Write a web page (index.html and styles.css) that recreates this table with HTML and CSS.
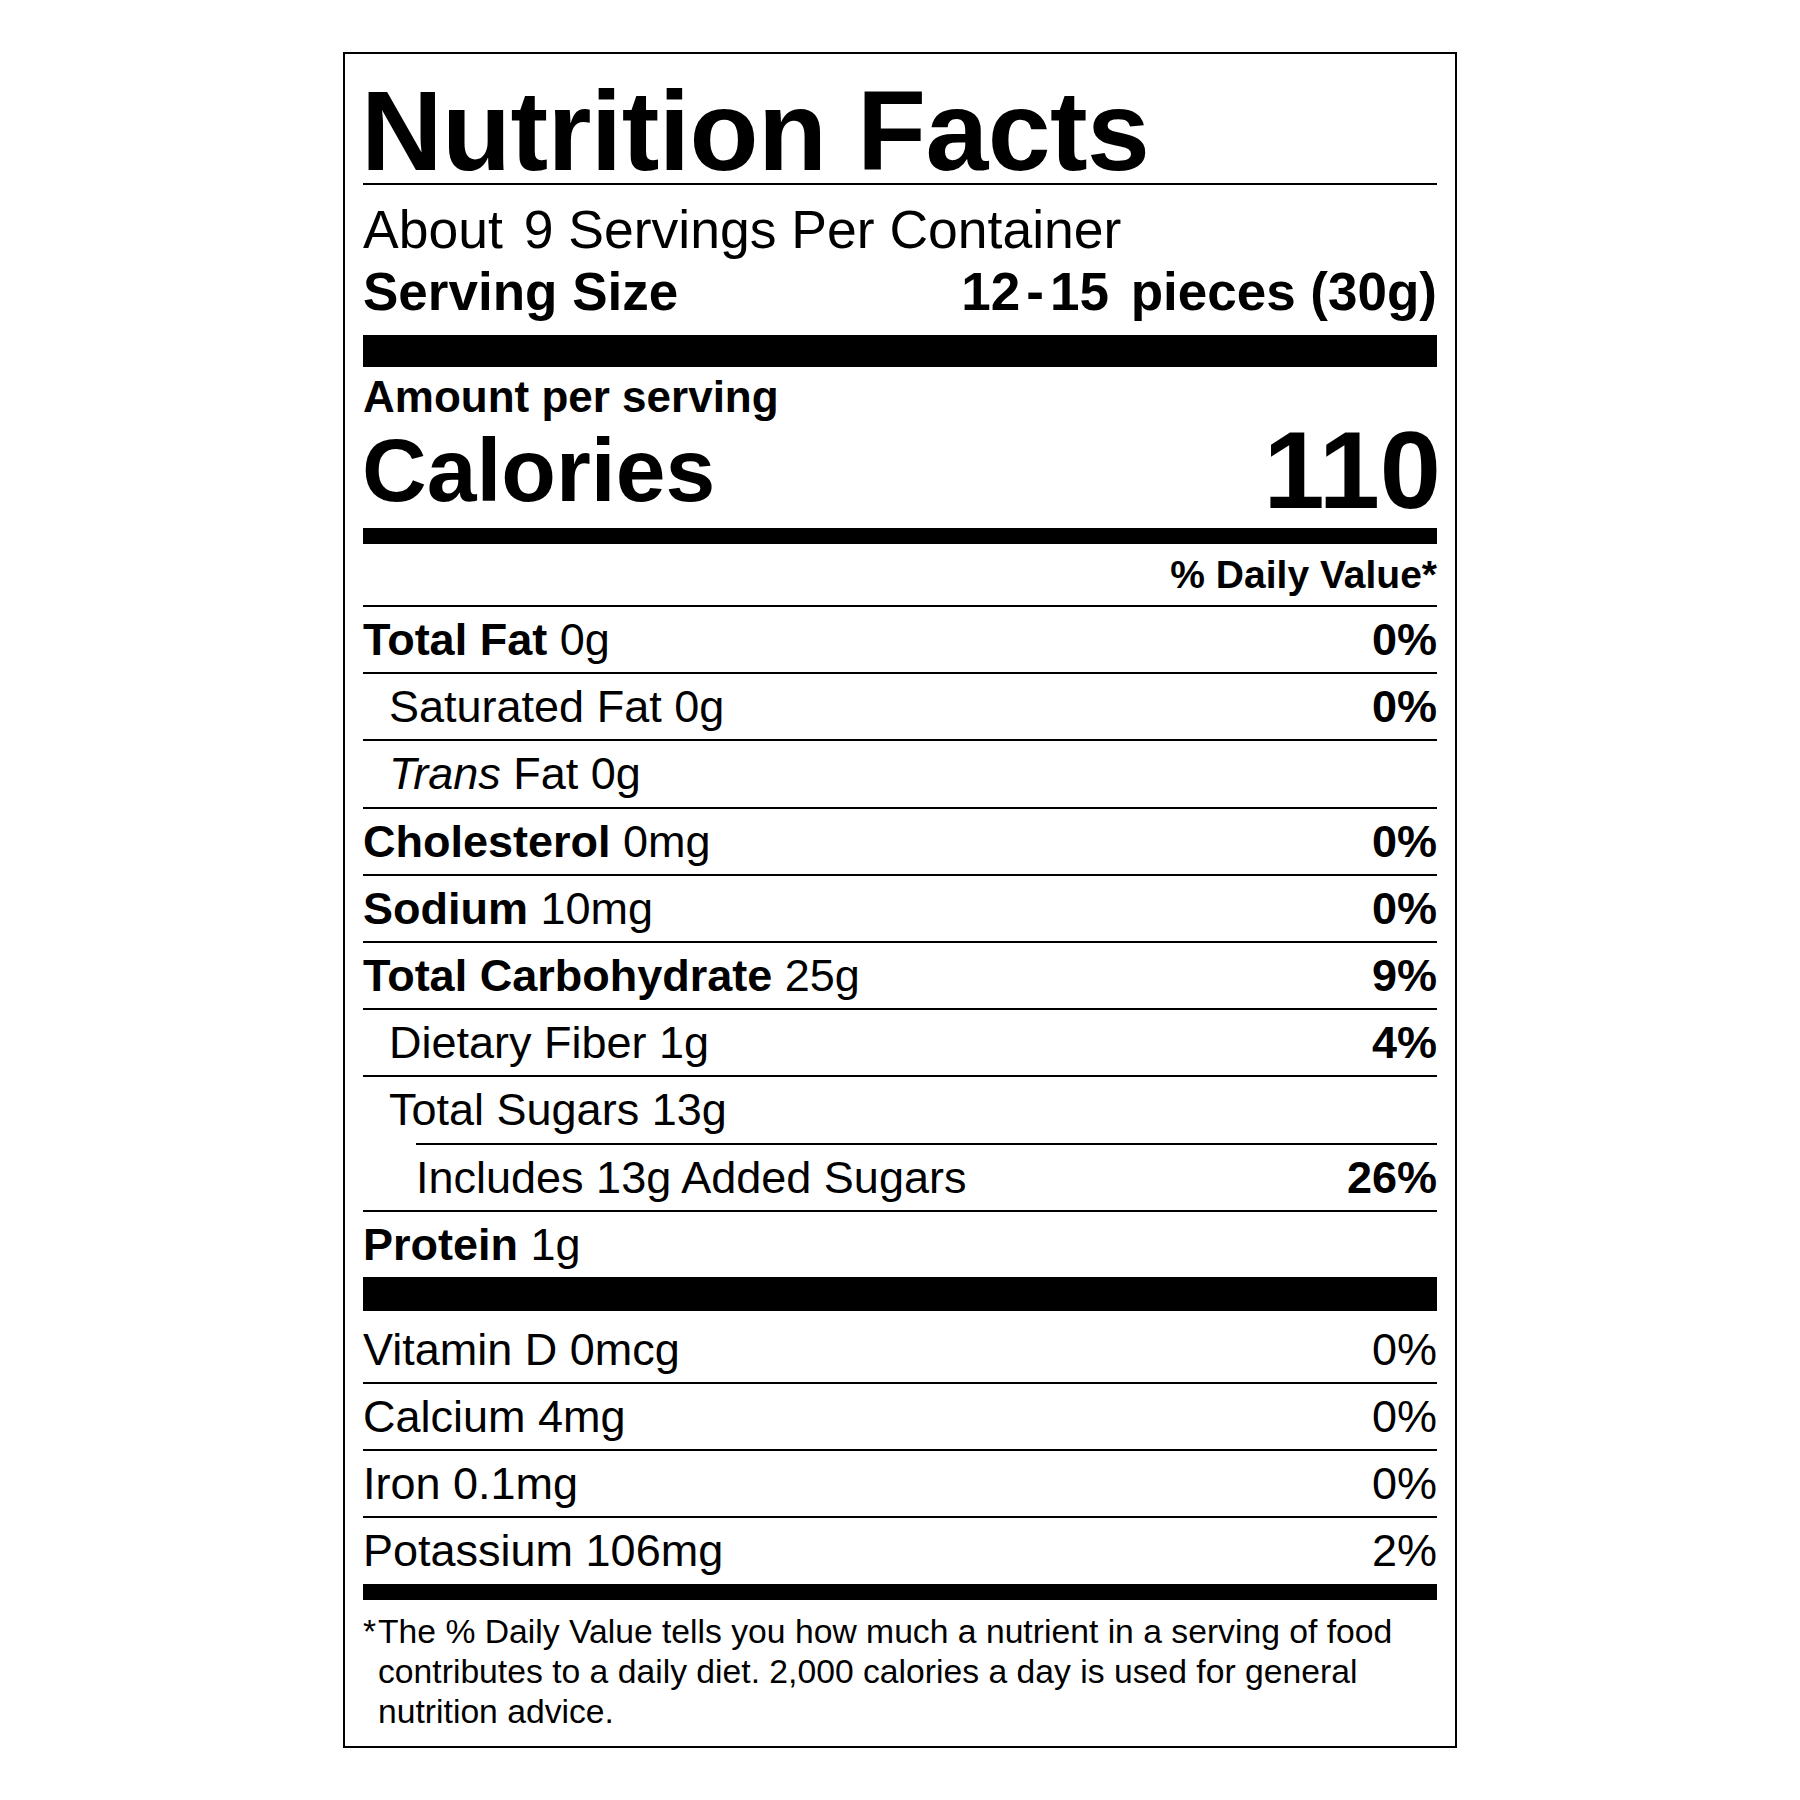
FILE: index.html
```html
<!DOCTYPE html>
<html lang="en">
<head>
<meta charset="utf-8">
<title>Nutrition Facts</title>
<link rel="stylesheet" href="styles.css">
</head>
<body>
<div class="label">
  <h1 class="title">Nutrition Facts</h1>
  <div class="servings"><span class="about">About</span> 9 Servings Per Container</div>
  <div class="serving-size">
    <span>Serving Size</span>
    <span><span class="qty">12<span class="dash">-</span>15</span> pieces (30g)</span>
  </div>
  <div class="bar bar-lg"></div>
  <div class="amount">Amount per serving</div>
  <div class="calories">
    <span class="cal-label">Calories</span>
    <span class="cal-value">110</span>
  </div>
  <div class="bar bar-md"></div>
  <div class="dv-head">% Daily Value*</div>

  <div class="row"><span><b>Total Fat</b> 0g</span><b>0%</b></div>
  <div class="row sub"><span>Saturated Fat 0g</span><b>0%</b></div>
  <div class="row sub"><span><i>Trans</i> Fat 0g</span></div>
  <div class="row"><span><b>Cholesterol</b> 0mg</span><b>0%</b></div>
  <div class="row"><span><b>Sodium</b> 10mg</span><b>0%</b></div>
  <div class="row"><span><b>Total Carbohydrate</b> 25g</span><b>9%</b></div>
  <div class="row sub"><span>Dietary Fiber 1g</span><b>4%</b></div>
  <div class="row sub no-rule"><span>Total Sugars 13g</span></div>
  <div class="added">
    <div class="added-inner"><span>Includes 13g Added Sugars</span><b>26%</b></div>
  </div>
  <div class="row no-rule"><span><b>Protein</b> 1g</span></div>
  <div class="bar bar-protein"></div>

  <div class="row first-vit"><span>Vitamin D 0mcg</span><span>0%</span></div>
  <div class="row"><span>Calcium 4mg</span><span>0%</span></div>
  <div class="row"><span>Iron 0.1mg</span><span>0%</span></div>
  <div class="row no-rule"><span>Potassium 106mg</span><span>2%</span></div>
  <div class="bar bar-end"></div>

  <p class="footnote"><span class="star">*</span>The % Daily Value tells you how much a nutrient in a serving of food contributes to a daily diet. 2,000 calories a day is used for general nutrition advice.</p>
</div>
</body>
</html>
```

FILE: styles.css
```css
html, body {
  margin: 0;
  padding: 0;
  background: #ffffff;
}

body {
  font-family: "Liberation Sans", Arial, Helvetica, sans-serif;
  color: #000;
}

.label {
  box-sizing: border-box;
  width: 1114px;
  margin: 52px auto 0;
  border: 2px solid #000;
  padding: 25px 18px 15px;
}

.title {
  margin: 0;
  font-size: 113px;
  line-height: 104px;
  font-weight: 700;
  letter-spacing: -0.6px;
  text-indent: -2px;
  border-bottom: 2px solid #000;
}

.servings {
  margin-top: 14px;
  font-size: 53.5px;
  line-height: 62px;
}

.about {
  margin-right: 6px;
}

.serving-size {
  display: flex;
  justify-content: space-between;
  font-size: 53px;
  line-height: 62px;
  font-weight: 700;
}

.qty {
  margin-right: 7px;
}

.dash {
  margin: 0 6px;
}

.bar {
  background: #000;
}

.bar-lg {
  height: 32px;
  margin-top: 12px;
}

.bar-md {
  height: 16px;
  margin-top: 8px;
}

.amount {
  margin-top: 7px;
  font-size: 44px;
  line-height: 46px;
  font-weight: 700;
}

.calories {
  display: flex;
  justify-content: space-between;
  align-items: flex-start;
  height: 100px;
  font-weight: 700;
}

.cal-label {
  font-size: 89.5px;
  line-height: 100px;
  margin-left: -1px;
}

.cal-value {
  font-size: 110px;
  line-height: 100px;
  margin-right: -4px;
}

.dv-head {
  height: 61px;
  font-size: 39px;
  line-height: 61px;
  font-weight: 700;
  text-align: right;
  border-bottom: 2px solid #000;
}

.row {
  display: flex;
  justify-content: space-between;
  height: 65.2px;
  font-size: 45px;
  line-height: 65.2px;
  border-bottom: 2px solid #000;
  white-space: nowrap;
}

.row b,
.added b {
  font-weight: 700;
}

.row.sub {
  padding-left: 26px;
}

.row.no-rule {
  border-bottom: none;
}

.added {
  border-bottom: 2px solid #000;
}

.added-inner {
  display: flex;
  justify-content: space-between;
  margin-left: 53px;
  height: 65.2px;
  font-size: 45px;
  line-height: 65.2px;
  border-top: 2px solid #000;
  white-space: nowrap;
}

.bar-protein {
  height: 34px;
}

.row.first-vit {
  padding-top: 6px;
}

.bar-end {
  height: 16px;
}

.footnote {
  margin: 11.5px 0 0;
  font-size: 33.7px;
  line-height: 40px;
  padding-left: 15px;
  text-indent: -15px;
}

.star {
  display: inline-block;
  text-indent: 0;
  width: 15px;
}
```
